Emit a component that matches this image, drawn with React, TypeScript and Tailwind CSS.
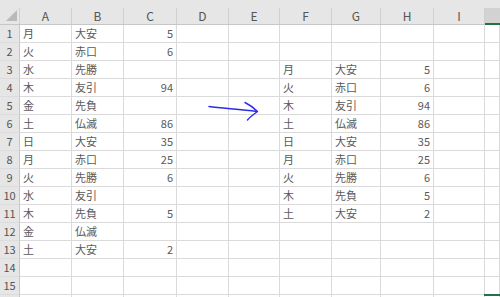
import React from 'react';

const COLS = ['A', 'B', 'C', 'D', 'E', 'F', 'G', 'H', 'I', ''];
const WIDTHS = ['w-[52px]', 'w-[52px]', 'w-[53px]', 'w-[52px]', 'w-[51px]', 'w-[52px]', 'w-[49px]', 'w-[53px]', 'w-[51px]', 'flex-1'];

const left: [string, string, string][] = [
  ['月', '大安', '5'],
  ['火', '赤口', '6'],
  ['水', '先勝', ''],
  ['木', '友引', '94'],
  ['金', '先負', ''],
  ['土', '仏滅', '86'],
  ['日', '大安', '35'],
  ['月', '赤口', '25'],
  ['火', '先勝', '6'],
  ['水', '友引', ''],
  ['木', '先負', '5'],
  ['金', '仏滅', ''],
  ['土', '大安', '2'],
];

const right: [string, string, string][] = [
  ['月', '大安', '5'],
  ['火', '赤口', '6'],
  ['木', '友引', '94'],
  ['土', '仏滅', '86'],
  ['日', '大安', '35'],
  ['月', '赤口', '25'],
  ['火', '先勝', '6'],
  ['木', '先負', '5'],
  ['土', '大安', '2'],
];

function cellValues(row: number): string[] {
  const v = Array(10).fill('');
  const l = left[row - 1];
  if (l) { v[0] = l[0]; v[1] = l[1]; v[2] = l[2]; }
  const r = right[row - 3];
  if (r) { v[5] = r[0]; v[6] = r[1]; v[7] = r[2]; }
  return v;
}

const NUMERIC = [2, 7];

export default function App() {
  const rows = Array.from({ length: 15 }, (_, i) => i + 1);

  return (
    <div
      className="relative w-[500px] h-[297px] overflow-hidden bg-white text-[#595959]"
      style={{ fontFamily: '"Noto Sans CJK JP", "Noto Sans", sans-serif' }}
    >
      {/* column headers */}
      <div className="flex h-[25px] bg-[#e6e6e6] border-b border-[#c6c6c6]">
        <div className="w-[20px] shrink-0 relative border-r border-[#d0d0d0] mt-[8px]">
          <div className="absolute right-[2px] bottom-[3px] w-0 h-0 border-l-[11px] border-l-transparent border-b-[11px] border-b-[#b9b9b9]" />
        </div>
        {COLS.map((c, i) => (
          <div
            key={i}
            className={`${WIDTHS[i]} shrink-0 flex items-center justify-center text-[12px] text-[#555] mt-[8px] ${
              c === '' ? 'bg-[#d2d2d2] border-b-2 border-[#217346] -mb-px' : 'border-r border-[#d0d0d0]'
            }`}
          >
            <span className="-mt-[1px]">{c}</span>
          </div>
        ))}
      </div>

      {rows.map(r => {
        const vals = cellValues(r);
        return (
          <div key={r} className="flex h-[18px]">
            <div className="w-[20px] shrink-0 bg-[#e6e6e6] border-r border-b border-[#c6c6c6] border-b-[#dcdcdc] flex items-center justify-center text-[11px] text-[#555]">
              {r}
            </div>
            {vals.map((v, i) => (
              <div
                key={i}
                className={`${WIDTHS[i]} shrink-0 border-r border-b border-[#dadada] flex items-center px-[3px] text-[11px] leading-none ${
                  NUMERIC.includes(i) ? 'justify-end' : 'justify-start'
                }`}
              >
                {v}
              </div>
            ))}
          </div>
        );
      })}

      {/* partly visible next row */}
      <div className="flex h-[18px]">
        <div className="w-[20px] shrink-0 bg-[#e6e6e6] border-r border-[#c6c6c6]" />
        {WIDTHS.map((w, i) => (
          <div key={i} className={`${w} shrink-0 border-r border-[#dadada]`} />
        ))}
      </div>

      {/* selection edge of the active cell */}
      <div className="absolute left-[484px] top-[294px] w-[16px] h-[2px] bg-[#217346]" />

      {/* hand-drawn arrow */}
      <svg className="absolute left-0 top-0 pointer-events-none" width="500" height="297">
        <path
          d="M209 106.5 C 222 108.5, 240 109, 257 111.5"
          fill="none"
          stroke="#2a2af0"
          strokeWidth="1.4"
          strokeLinecap="round"
        />
        <path
          d="M245 102.5 C 250 105, 254 108, 257.5 111.5 C 254 114, 250 117, 247.5 120"
          fill="none"
          stroke="#2a2af0"
          strokeWidth="1.4"
          strokeLinecap="round"
          strokeLinejoin="round"
        />
      </svg>
    </div>
  );
}
